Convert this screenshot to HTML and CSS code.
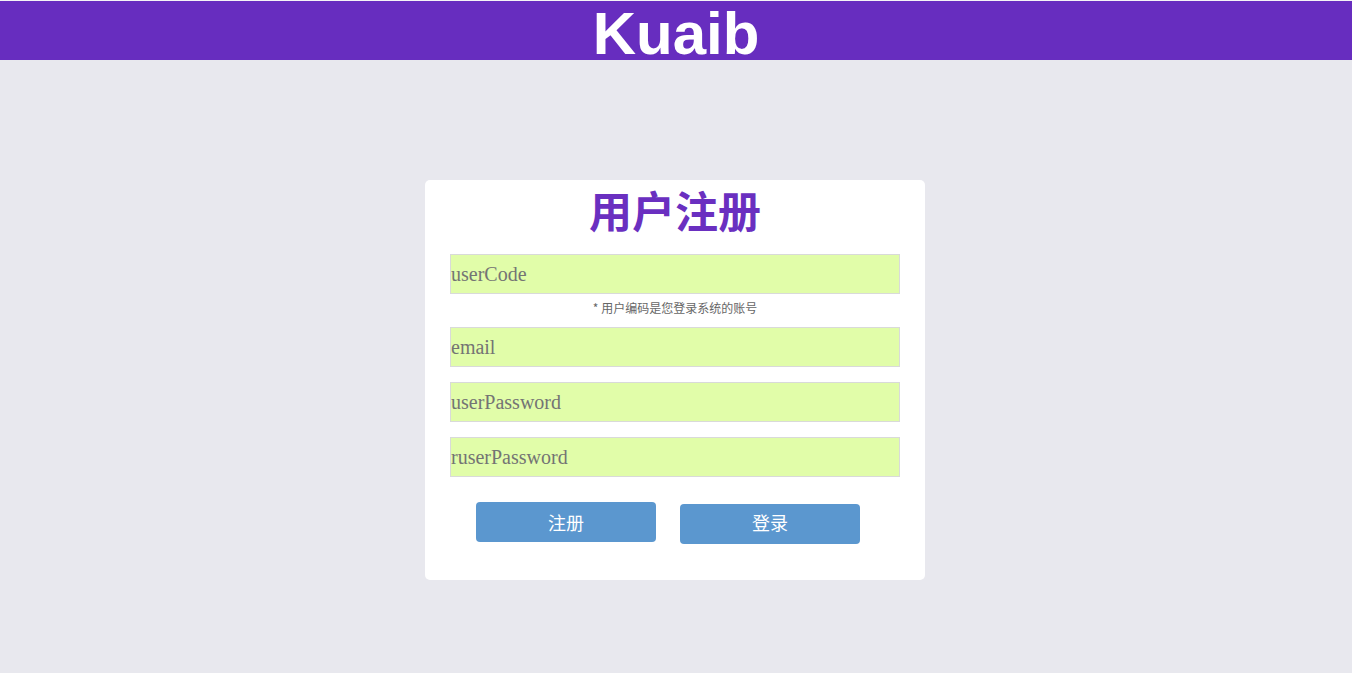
FILE: index.html
```html
<!DOCTYPE html>
<html lang="zh">
<head>
<meta charset="utf-8">
<title>Kuaib</title>
<link rel="stylesheet" href="styles.css">
</head>
<body>
<div class="topline"></div>
<header class="header">
  <h1 class="brand">Kuaib</h1>
</header>
<main class="main">
  <form class="card">
    <h2 class="card-title">用户注册</h2>
    <input class="field" type="text" placeholder="userCode">
    <p class="hint">* 用户编码是您登录系统的账号</p>
    <input class="field" type="email" placeholder="email">
    <input class="field gap" type="password" placeholder="userPassword">
    <input class="field gap" type="password" placeholder="ruserPassword">
    <div class="actions">
      <button class="btn btn-reg" type="button">注册</button>
      <button class="btn btn-login" type="button">登录</button>
    </div>
  </form>
</main>
</body>
</html>
```
FILE: styles.css
```css
html, body {
  margin: 0;
  padding: 0;
}
body {
  background: #e8e8ee;
  height: 673px;
  font-family: "Liberation Sans", "Noto Sans CJK SC", sans-serif;
}
.topline {
  height: 1px;
  background: #f4f4f6;
}
.header {
  height: 59px;
  background: #672dbf;
  display: flex;
  justify-content: center;
  align-items: flex-end;
}
.brand {
  margin: 0;
  color: #fff;
  font-family: "Liberation Sans", sans-serif;
  font-weight: bold;
  font-size: 60px;
  line-height: 66px;
  height: 59px;
  overflow: visible;
}
.main {
  display: flex;
  justify-content: center;
  padding-top: 120px;
  padding-right: 2px;
}
.card {
  width: 500px;
  height: 400px;
  box-sizing: border-box;
  background: #fff;
  border-radius: 5px;
  padding: 0 25px 0;
  display: flex;
  flex-direction: column;
}
.card-title {
  margin: 0 0 16px;
  text-align: center;
  color: #6a2fc0;
  font-family: "Noto Sans CJK SC", sans-serif;
  font-weight: bold;
  font-size: 43px;
  line-height: 58px;
  height: 58px;
}
.field {
  width: 450px;
  height: 40px;
  flex-shrink: 0;
  box-sizing: border-box;
  margin: 0;
  padding: 0;
  border: 1px solid #d9dad9;
  background: #e1fda9;
  font-family: "Liberation Serif", serif;
  font-size: 20px;
  color: #333;
  outline: none;
}
.field::placeholder {
  color: #747474;
}
.hint {
  margin: 0;
  height: 33px;
  line-height: 28px;
  text-align: center;
  font-size: 12px;
  color: #666;
  font-family: "Noto Sans CJK SC", sans-serif;
}
.gap {
  margin-top: 15px;
}
.actions {
  display: flex;
  align-items: flex-start;
  gap: 24px;
  padding-left: 26px;
  margin-top: 25px;
}
.btn {
  width: 180px;
  height: 40px;
  flex-shrink: 0;
  border: none;
  border-radius: 4px;
  background: #5b97cf;
  color: #fff;
  font-family: "Noto Sans CJK SC", sans-serif;
  font-size: 18px;
  line-height: 36px;
  padding: 0;
}
.btn-login {
  margin-top: 2px;
  padding-bottom: 4px;
}
```
